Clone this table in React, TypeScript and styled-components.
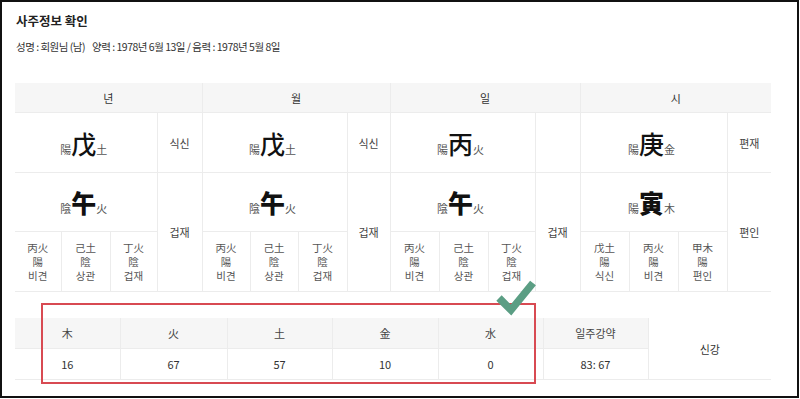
import React from 'react'
import styled, { createGlobalStyle } from 'styled-components'

const GlobalStyle = createGlobalStyle`
  html, body {
    margin: 0;
    padding: 0;
    background: #ffffff;
  }
  body {
    font-family: 'Noto Sans CJK KR', 'Noto Sans', sans-serif;
    color: #333333;
  }
`

const Frame = styled.div`
  box-sizing: border-box;
  width: 799px;
  height: 398px;
  border: 2px solid #111111;
  padding: 9px 0 0 13px;
  background: #ffffff;
  overflow: hidden;
`

const Title = styled.h2`
  margin: 0;
  padding-left: 1px;
  font-size: 12.5px;
  font-weight: 700;
  line-height: 20px;
  color: #222222;
`

const Info = styled.p`
  margin: 8px 0 0;
  padding-left: 1px;
  font-size: 10.5px;
  line-height: 15px;
  color: #333333;
  letter-spacing: -0.5px;
`

const Gap = styled.span`
  display: inline-block;
  width: 7px;
`

const Table = styled.table`
  border-collapse: collapse;
  table-layout: fixed;
  width: 756px;
  font-size: 11px;
  color: #444444;
`

const PillarTable = styled(Table)`
  margin-top: 29px;
`

const HeadCell = styled.th`
  height: 29px;
  padding: 0;
  background: #f6f6f6;
  font-weight: 400;
  color: #333333;
  border-left: 1px solid #ececec;
  border-bottom: 1px solid #ececec;
  &:first-child {
    border-left: none;
  }
`

const Cell = styled.td<{ $h?: number; $edge?: boolean }>`
  height: ${({ $h }) => $h ?? 59}px;
  padding: 0;
  text-align: center;
  vertical-align: middle;
  border-bottom: 1px solid #ececec;
  border-left: ${({ $edge }) => ($edge ? 'none' : '1px solid #ececec')};
  color: #444444;
`

const Glyph = styled.span`
  display: inline-flex;
  align-items: baseline;
  transform: translateX(-2px);
`

const Small = styled.span`
  font-size: 11px;
  color: #555555;
`

const Big = styled.span<{ $heavy?: boolean }>`
  font-size: 25px;
  line-height: 30px;
  font-weight: ${({ $heavy }) => ($heavy ? 900 : 500)};
  color: #111111;
`

const Hidden = styled.div`
  display: flex;
  flex-direction: column;
  align-items: center;
  font-size: 10.5px;
  color: #555555;
`

const HiddenLine = styled.span`
  display: block;
  height: 14px;
  line-height: 14px;
`

const BottomWrap = styled.div`
  position: relative;
  margin-top: 26px;
  width: 756px;
`

const ElemHead = styled.th`
  height: 30px;
  padding: 0;
  background: #f6f6f6;
  font-weight: 400;
  color: #444444;
  border-left: 1px solid #ececec;
  border-bottom: 1px solid #ececec;
  &:first-child {
    border-left: none;
  }
`

const ElemCell = styled.td<{ $plain?: boolean }>`
  height: 30px;
  padding: 0;
  text-align: center;
  vertical-align: middle;
  background: ${({ $plain }) => ($plain ? '#ffffff' : 'transparent')};
  border-left: 1px solid #ececec;
  border-bottom: 1px solid #ececec;
  color: #333333;
  &:first-child {
    border-left: none;
  }
`

const Highlight = styled.div`
  position: absolute;
  left: 26px;
  top: -15px;
  width: 495px;
  height: 81px;
  box-sizing: border-box;
  border: 2px solid #d84a52;
  pointer-events: none;
`

const Check = styled.svg`
  position: absolute;
  left: 478px;
  top: -43px;
  width: 44px;
  height: 42px;
`

type Hide = { stem: string; yy: string; god: string }

type Pillar = {
  label: string
  cols: number[]
  stem: { yy: string; ch: string; el: string; heavy?: boolean }
  stemGod: string
  branch: { yy: string; ch: string; el: string; heavy?: boolean }
  branchGod: string
  hidden: Hide[]
}

const pillars: Pillar[] = [
  {
    label: '년',
    cols: [46, 49, 47, 45],
    stem: { yy: '陽', ch: '戊', el: '土' },
    stemGod: '식신',
    branch: { yy: '陰', ch: '午', el: '火', heavy: true },
    branchGod: '겁재',
    hidden: [
      { stem: '丙火', yy: '陽', god: '비견' },
      { stem: '己土', yy: '陰', god: '상관' },
      { stem: '丁火', yy: '陰', god: '겁재' },
    ],
  },
  {
    label: '월',
    cols: [48, 48, 49, 43],
    stem: { yy: '陽', ch: '戊', el: '土' },
    stemGod: '식신',
    branch: { yy: '陰', ch: '午', el: '火', heavy: true },
    branchGod: '겁재',
    hidden: [
      { stem: '丙火', yy: '陽', god: '비견' },
      { stem: '己土', yy: '陰', god: '상관' },
      { stem: '丁火', yy: '陰', god: '겁재' },
    ],
  },
  {
    label: '일',
    cols: [49, 49, 47, 45],
    stem: { yy: '陽', ch: '丙', el: '火' },
    stemGod: '',
    branch: { yy: '陰', ch: '午', el: '火', heavy: true },
    branchGod: '겁재',
    hidden: [
      { stem: '丙火', yy: '陽', god: '비견' },
      { stem: '己土', yy: '陰', god: '상관' },
      { stem: '丁火', yy: '陰', god: '겁재' },
    ],
  },
  {
    label: '시',
    cols: [49, 49, 49, 44],
    stem: { yy: '陽', ch: '庚', el: '金' },
    stemGod: '편재',
    branch: { yy: '陽', ch: '寅', el: '木', heavy: true },
    branchGod: '편인',
    hidden: [
      { stem: '戊土', yy: '陽', god: '식신' },
      { stem: '丙火', yy: '陽', god: '비견' },
      { stem: '甲木', yy: '陽', god: '편인' },
    ],
  },
]

const elements = [
  { name: '木', value: 16 },
  { name: '火', value: 67 },
  { name: '土', value: 57 },
  { name: '金', value: 10 },
  { name: '水', value: 0 },
]

const elemWidths = [105, 107, 105, 106, 105, 105, 123]

const Mark = ({ yy, ch, el, heavy }: { yy: string; ch: string; el: string; heavy?: boolean }) => (
  <Glyph>
    <Small>{yy}</Small>
    <Big $heavy={heavy}>{ch}</Big>
    <Small>{el}</Small>
  </Glyph>
)

const App = () => {
  return (
    <>
      <GlobalStyle />
      <Frame>
        <Title>사주정보 확인</Title>
        <Info>
          성명 : 회원님 (남)
          <Gap />
          양력 : 1978년 6월 13일 / 음력 : 1978년 5월 8일
        </Info>

        <PillarTable>
          <colgroup>
            {pillars.map((p) => p.cols.map((w, i) => <col key={p.label + i} style={{ width: w }} />))}
          </colgroup>
          <thead>
            <tr>
              {pillars.map((p) => (
                <HeadCell key={p.label} colSpan={4}>
                  {p.label}
                </HeadCell>
              ))}
            </tr>
          </thead>
          <tbody>
            <tr>
              {pillars.map((p, i) => (
                <React.Fragment key={p.label}>
                  <Cell colSpan={3} $h={59} $edge={i === 0}>
                    <Mark {...p.stem} />
                  </Cell>
                  <Cell>{p.stemGod}</Cell>
                </React.Fragment>
              ))}
            </tr>
            <tr>
              {pillars.map((p, i) => (
                <React.Fragment key={p.label}>
                  <Cell colSpan={3} $h={58} $edge={i === 0}>
                    <Mark {...p.branch} />
                  </Cell>
                  <Cell rowSpan={2}>{p.branchGod}</Cell>
                </React.Fragment>
              ))}
            </tr>
            <tr>
              {pillars.map((p, i) =>
                p.hidden.map((h, j) => (
                  <Cell key={p.label + j} $h={59} $edge={i === 0 && j === 0}>
                    <Hidden>
                      <HiddenLine>{h.stem}</HiddenLine>
                      <HiddenLine>{h.yy}</HiddenLine>
                      <HiddenLine>{h.god}</HiddenLine>
                    </Hidden>
                  </Cell>
                )),
              )}
            </tr>
          </tbody>
        </PillarTable>

        <BottomWrap>
          <Table>
            <colgroup>
              {elemWidths.map((w, i) => (
                <col key={i} style={{ width: w }} />
              ))}
            </colgroup>
            <tbody>
              <tr>
                {elements.map((e) => (
                  <ElemHead key={e.name}>{e.name}</ElemHead>
                ))}
                <ElemHead>일주강약</ElemHead>
                <ElemCell rowSpan={2} $plain>
                  신강
                </ElemCell>
              </tr>
              <tr>
                {elements.map((e) => (
                  <ElemCell key={e.name}>{e.value}</ElemCell>
                ))}
                <ElemCell>83: 67</ElemCell>
              </tr>
            </tbody>
          </Table>
          <Highlight />
          <Check viewBox="0 0 44 42">
            <polyline
              points="6,23 18,35 40,8"
              fill="none"
              stroke="#5b9e84"
              strokeWidth="7.5"
              strokeLinecap="butt"
              strokeLinejoin="miter"
            />
          </Check>
        </BottomWrap>
      </Frame>
    </>
  )
}

export default App
